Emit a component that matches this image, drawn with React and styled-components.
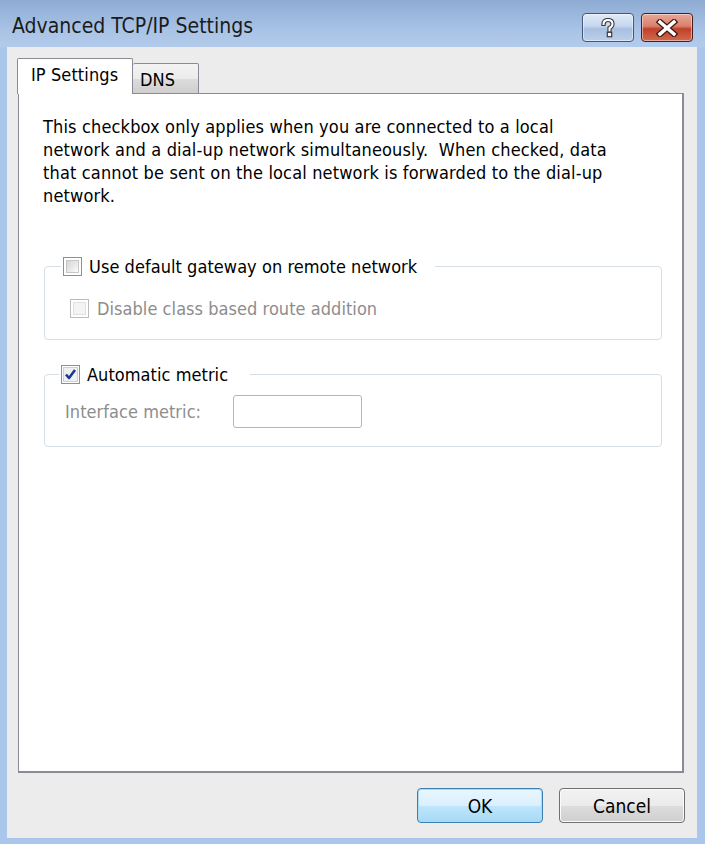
import React from 'react';
import styled, { createGlobalStyle } from 'styled-components';

const GlobalStyle = createGlobalStyle`
  html, body {
    margin: 0;
    padding: 0;
    background: #aac6ea;
  }
  body {
    font-family: "DejaVu Sans Condensed", "DejaVu Sans", sans-serif;
    color: #000;
  }
`;

const Window = styled.div`
  width: 705px;
  height: 844px;
  box-sizing: border-box;
  display: flex;
  flex-direction: column;
  padding: 0 8px 6px 7px;
  background: linear-gradient(#8eabd3 0px, #a9c3e6 30px, #b3cbeb 47px, #aac6ea 48px);
`;

const TitleBar = styled.div`
  height: 47px;
  display: flex;
  align-items: flex-start;
  justify-content: space-between;
`;

const Title = styled.div`
  font-size: 21px;
  margin: 14px 0 0 5px;
  color: #1b1b1b;
`;

const Caption = styled.div`
  display: flex;
  gap: 7px;
  margin: 13px 4px 0 0;
`;

const CaptionButton = styled.div`
  width: ${p => p.$w}px;
  height: 29px;
  box-sizing: border-box;
  border: 1px solid ${p => (p.$close ? '#4a1c1c' : '#45587a')};
  border-radius: 4px;
  display: flex;
  align-items: center;
  justify-content: center;
  box-shadow: inset 0 0 0 1px rgba(255, 255, 255, 0.45);
  background: ${p =>
    p.$close
      ? 'linear-gradient(#e9a897 0%, #d8816c 45%, #c1412a 55%, #cf6a4f 100%)'
      : 'linear-gradient(#e1ebf7 0%, #c5d6ee 45%, #a8bfe0 55%, #bcd0ec 100%)'};
`;

const Body = styled.div`
  flex: 1;
  background: #ececec;
  display: flex;
  flex-direction: column;
  padding: 12px 13px 0 10px;
  box-sizing: border-box;
`;

const TabStrip = styled.div`
  display: flex;
  align-items: flex-end;
  height: 35px;
  margin-bottom: -1px;
  position: relative;
  z-index: 1;
`;

const Tab = styled.div`
  box-sizing: border-box;
  width: ${p => (p.$active ? 116 : 66)}px;
  height: ${p => (p.$active ? 36 : 31)}px;
  padding: ${p => (p.$active ? '5px 0 0 13px' : '5px 0 0 7px')};
  font-size: 18px;
  letter-spacing: 0.1px;
  border: 1px solid #898c95;
  border-bottom: ${p => (p.$active ? 'none' : '1px solid #898c95')};
  border-left: ${p => (p.$active ? '1px solid #898c95' : 'none')};
  background: ${p => (p.$active ? '#fff' : 'linear-gradient(#f3f3f3 0%, #ebebeb 50%, #dcdcdc 51%, #cfcfcf 100%)')};
  border-radius: 2px 2px 0 0;
`;

const Panel = styled.div`
  height: 680px;
  box-sizing: border-box;
  background: #fff;
  border: 1px solid #898c95;
  border-right-width: 2px;
  border-bottom-width: 2px;
  padding: 21px 20px 0 24px;
  margin-left: 1px;
  display: flex;
  flex-direction: column;
`;

const Note = styled.p`
  margin: 0;
  font-size: 18px;
  line-height: 23px;
  letter-spacing: 0.15px;
`;

const Group = styled.fieldset`
  margin: ${p => p.$top}px 0 0 1px;
  padding: ${p => p.$pad};
  border: 1px solid #d5dfe5;
  border-radius: 4px;
  min-width: 0;
`;

const Legend = styled.legend`
  margin-left: ${p => p.$indent}px;
  padding: 0 ${p => p.$right}px 0 2px;
  display: flex;
  align-items: center;
  gap: 7px;
  height: 22px;
`;

const Label = styled.span`
  font-size: 18px;
  letter-spacing: 0.05px;
  color: ${p => (p.$disabled ? '#8d8d8d' : '#000')};
`;

const Row = styled.div`
  display: flex;
  align-items: center;
  gap: ${p => p.$gap}px;
  padding-left: ${p => p.$indent}px;
`;

const Box = styled.span`
  width: 19px;
  height: 19px;
  box-sizing: border-box;
  border: 1px solid ${p => (p.$disabled ? '#bcbcbc' : '#8e8f8f')};
  background: #fff;
  display: flex;
  align-items: center;
  justify-content: center;
  flex: none;

  &::after {
    content: '';
    display: ${p => (p.$checked ? 'none' : 'block')};
    width: 13px;
    height: 13px;
    box-sizing: border-box;
    border: 1px solid ${p => (p.$disabled ? '#e0e0e0' : '#c6c6c6')};
    background: ${p =>
      p.$disabled ? '#f4f4f4' : 'linear-gradient(135deg, #d6d6d6 0%, #f2f2f2 80%, #fff 100%)'};
  }
`;

const MetricInput = styled.div`
  width: 129px;
  height: 33px;
  box-sizing: border-box;
  border: 1px solid #b5b5b5;
  border-radius: 3px;
  background: #fff;
`;

const Footer = styled.div`
  height: 65px;
  display: flex;
  justify-content: flex-end;
  align-items: center;
  gap: 16px;
  margin-right: -1px;
`;

const Button = styled.div`
  width: 126px;
  height: 35px;
  box-sizing: border-box;
  border-radius: 4px;
  display: flex;
  align-items: center;
  justify-content: center;
  font-size: 19px;
  border: 1px solid ${p => (p.$primary ? '#3c7fb1' : '#707070')};
  box-shadow: inset 0 0 0 1px ${p => (p.$primary ? '#a7dbf6' : '#fbfbfb')};
  background: ${p =>
    p.$primary
      ? 'linear-gradient(#eaf6fd 0%, #d9f0fc 50%, #bee6fd 51%, #a7d9f5 100%)'
      : 'linear-gradient(#f2f2f2 0%, #ebebeb 50%, #dddddd 51%, #cfcfcf 100%)'};
`;

const CheckBox = ({ checked, disabled }) => (
  <Box $checked={checked} $disabled={disabled}>
    {checked && (
      <svg width="15" height="15" viewBox="0 0 15 15">
        <rect x="0.5" y="0.5" width="14" height="14" fill="#f0f0f0" stroke="#cfcfcf" />
        <path d="M3 7.5 L6 11 L12 3" fill="none" stroke="#1e3a8f" strokeWidth="2.6" strokeLinejoin="round" />
      </svg>
    )}
  </Box>
);

const App = () => (
  <>
    <GlobalStyle />
    <Window>
      <TitleBar>
        <Title>Advanced TCP/IP Settings</Title>
        <Caption>
          <CaptionButton $w={52}>
            <svg width="16" height="20" viewBox="0 0 16 20">
              <path d="M3.5 6 Q3.5 2 8 2 Q12.5 2 12.5 6 Q12.5 8.5 9.5 10 L9.5 12.5" fill="none" stroke="#3a3a3a" strokeWidth="4.2" strokeLinecap="square" />
              <path d="M3.5 6 Q3.5 2 8 2 Q12.5 2 12.5 6 Q12.5 8.5 9.5 10 L9.5 12.5" fill="none" stroke="#fff" strokeWidth="2" strokeLinecap="square" />
              <rect x="7.3" y="14.3" width="4.4" height="4.4" fill="#fff" stroke="#3a3a3a" strokeWidth="1.2" />
            </svg>
          </CaptionButton>
          <CaptionButton $w={52} $close>
            <svg width="22" height="18" viewBox="0 0 22 18">
              <path d="M4 3 L18 15 M18 3 L4 15" stroke="#3b1a14" strokeWidth="6" strokeLinecap="square" />
              <path d="M4 3 L18 15 M18 3 L4 15" stroke="#fff" strokeWidth="3.4" strokeLinecap="square" />
            </svg>
          </CaptionButton>
        </Caption>
      </TitleBar>
      <Body>
        <TabStrip>
          <Tab $active>IP Settings</Tab>
          <Tab>DNS</Tab>
        </TabStrip>
        <Panel>
          <Note>
            This checkbox only applies when you are connected to a local<br />
            network and a dial-up network simultaneously.&nbsp; When checked, data<br />
            that cannot be sent on the local network is forwarded to the dial-up<br />
            network.
          </Note>
          <Group $top={48} $pad="21px 0 20px 0">
            <Legend $indent={16} $right={18}>
              <CheckBox />
              <Label>Use default gateway on remote network</Label>
            </Legend>
            <Row $indent={25} $gap={8}>
              <CheckBox disabled />
              <Label $disabled>Disable class based route addition</Label>
            </Row>
          </Group>
          <Group $top={23} $pad="10px 0 18px 0">
            <Legend $indent={14} $right={22}>
              <CheckBox checked />
              <Label>Automatic metric</Label>
            </Legend>
            <Row $indent={20} $gap={32}>
              <Label $disabled>Interface metric:</Label>
              <MetricInput />
            </Row>
          </Group>
        </Panel>
        <Footer>
          <Button $primary>OK</Button>
          <Button>Cancel</Button>
        </Footer>
      </Body>
    </Window>
  </>
);

export default App;
